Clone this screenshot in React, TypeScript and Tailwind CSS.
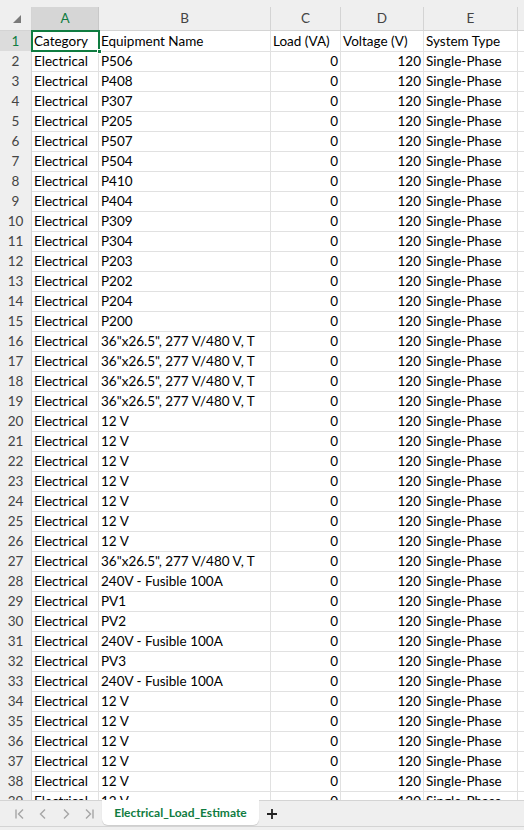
import React from "react";

const rowsB: string[] = [
  "P506","P408","P307","P205","P507","P504","P410","P404","P309","P304","P203","P202","P204","P200",
  '36"x26.5", 277 V/480 V, T','36"x26.5", 277 V/480 V, T','36"x26.5", 277 V/480 V, T','36"x26.5", 277 V/480 V, T',
  "12 V","12 V","12 V","12 V","12 V","12 V","12 V",
  '36"x26.5", 277 V/480 V, T',
  "240V - Fusible 100A","PV1","PV2","240V - Fusible 100A","PV3","240V - Fusible 100A",
  "12 V","12 V","12 V","12 V","12 V","12 V",
];

const font = { fontFamily: "Lato, 'Liberation Sans', sans-serif" };

const cols = "grid grid-cols-[32px_67px_172px_70px_83px_94px_1fr]";

export default function App() {
  return (
    <div className="w-[524px] h-[830px] flex flex-col overflow-hidden bg-white text-[13.5px] text-black" style={font}>
      <div className="flex-1 overflow-hidden relative">
        <div className="h-[7px] bg-[#efefef]" />
        <div className={`${cols} h-[24px] bg-[#efefef] text-[#444] text-[13.5px]`}>
          <div className="border-r border-b border-[#d4d4d4] flex items-end justify-end pr-[10px] pb-[7px]">
            <svg width="8" height="8" viewBox="0 0 8 8"><polygon points="8,0 8,8 0,8" fill="#7a7a7a" /></svg>
          </div>
          <div className="bg-[#d6d6d6] border-r border-b border-[#c8c8c8] flex items-center justify-center text-[#107c41]">A</div>
          <div className="border-r border-b border-[#d4d4d4] flex items-center justify-center">B</div>
          <div className="border-r border-b border-[#d4d4d4] flex items-center justify-center">C</div>
          <div className="border-r border-b border-[#d4d4d4] flex items-center justify-center">D</div>
          <div className="border-r border-b border-[#d4d4d4] flex items-center justify-center">E</div>
          <div className="border-b border-[#d4d4d4]" />
        </div>
        <div className={`${cols} h-[20px] leading-[20px]`}>
          <div className="bg-[#dcdcdc] border-r border-b border-[#c8c8c8] text-center text-[13.5px] text-[#107c41]">1</div>
          <div className="border-r border-b border-[#e1e1e1] pl-[2px] whitespace-nowrap overflow-hidden">Category</div>
          <div className="border-r border-b border-[#e1e1e1] pl-[2px] whitespace-nowrap overflow-hidden">Equipment Name</div>
          <div className="border-r border-b border-[#e1e1e1] pl-[2px] whitespace-nowrap overflow-hidden">Load (VA)</div>
          <div className="border-r border-b border-[#e1e1e1] pl-[2px] whitespace-nowrap overflow-hidden">Voltage (V)</div>
          <div className="border-r border-b border-[#e1e1e1] pl-[2px] whitespace-nowrap overflow-hidden">System Type</div>
          <div className="border-b border-[#e1e1e1]" />
        </div>
        {rowsB.map((b, i) => (
          <div key={i} className={`${cols} h-[20px] leading-[20px]`}>
            <div className="bg-[#efefef] border-r border-b border-[#d4d4d4] text-center text-[13.5px] text-[#444]">{i + 2}</div>
            <div className="border-r border-b border-[#e1e1e1] pl-[2px] whitespace-nowrap overflow-hidden">Electrical</div>
            <div className="border-r border-b border-[#e1e1e1] pl-[2px] whitespace-nowrap overflow-hidden">{b}</div>
            <div className="border-r border-b border-[#e1e1e1] pr-[2px] text-right whitespace-nowrap overflow-hidden">0</div>
            <div className="border-r border-b border-[#e1e1e1] pr-[2px] text-right whitespace-nowrap overflow-hidden">120</div>
            <div className="border-r border-b border-[#e1e1e1] pl-[2px] whitespace-nowrap overflow-hidden">Single-Phase</div>
            <div className="border-b border-[#e1e1e1]" />
          </div>
        ))}
        <div className="absolute left-[31px] top-[30px] w-[69px] h-[22px] border-2 border-[#107c41]" />
        <div className="absolute left-[97px] top-[49px] w-[5px] h-[5px] bg-[#107c41] border border-white" />
      </div>
      <div className="h-[30px] bg-[#efefef] border-t border-[#d4d4d4] flex items-start relative">
        <div className="flex items-center h-[25px] pl-[14px] gap-[11px] text-[#a6a6a6]">
          <svg width="12" height="12" viewBox="0 0 12 12" fill="none" stroke="currentColor" strokeWidth="1.4"><path d="M2 1.5v9M9 1.5L4.5 6 9 10.5" /></svg>
          <svg width="12" height="12" viewBox="0 0 12 12" fill="none" stroke="currentColor" strokeWidth="1.4"><path d="M8 1.5L3.5 6 8 10.5" /></svg>
          <svg width="12" height="12" viewBox="0 0 12 12" fill="none" stroke="currentColor" strokeWidth="1.4"><path d="M4 1.5L8.5 6 4 10.5" /></svg>
          <svg width="12" height="12" viewBox="0 0 12 12" fill="none" stroke="currentColor" strokeWidth="1.4"><path d="M10 1.5v9M3 1.5L7.5 6 3 10.5" /></svg>
        </div>
        <div className="ml-[7px] -mt-px h-[25px] w-[157px] bg-white rounded-b-[6px] shadow-[0_1px_1px_rgba(0,0,0,0.15)] flex items-center justify-center text-[#107c41] font-bold text-[12px]">
          Electrical_Load_Estimate
        </div>
        <div className="ml-[7px] h-[25px] flex items-center text-[#222]">
          <svg width="12" height="12" viewBox="0 0 12 12" fill="none" stroke="currentColor" strokeWidth="1.8"><path d="M6 1v10M1 6h10" /></svg>
        </div>
        <div className="absolute left-0 right-0 bottom-[3px] h-px bg-[#d4d4d4]" />
      </div>
    </div>
  );
}
